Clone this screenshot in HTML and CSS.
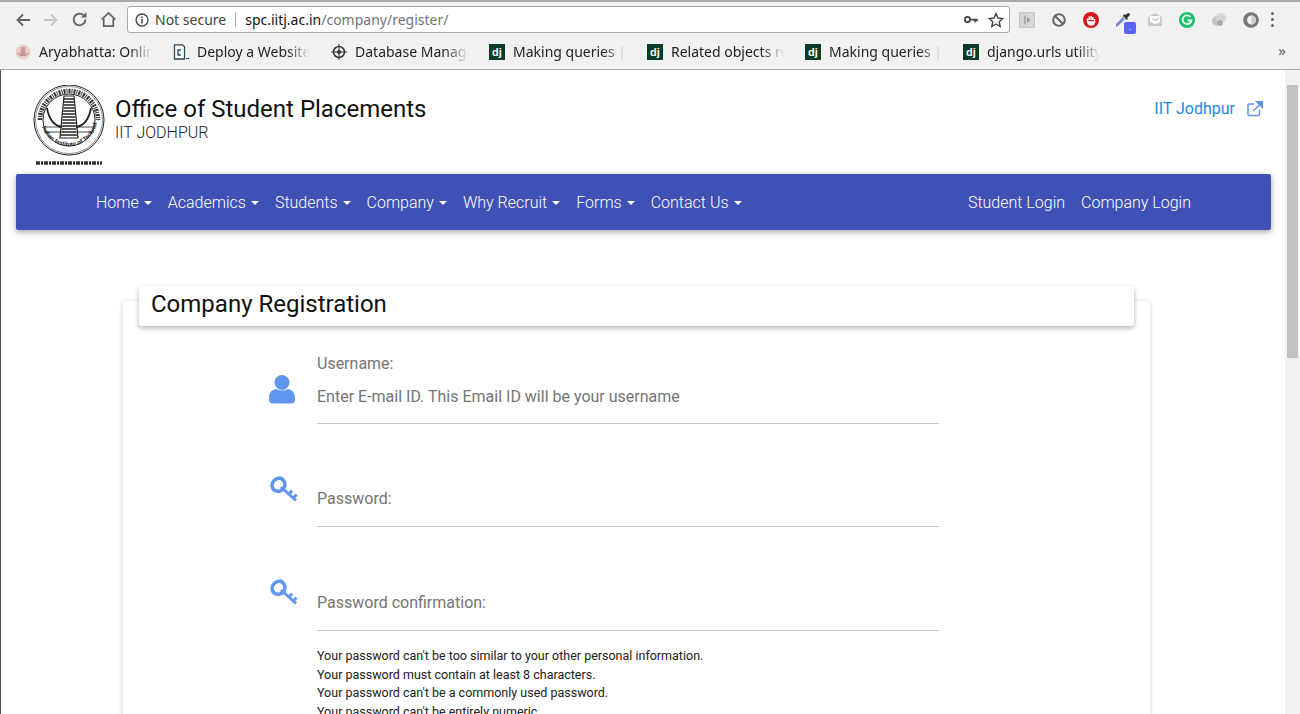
FILE: index.html
```html
<!DOCTYPE html>
<html lang="en">
<head>
    <meta charset="UTF-8">
    <meta name="viewport" content="width=device-width, initial-scale=1.0">
    <title>Company Registration</title>
    <link rel="stylesheet" href="styles.css">
</head>
<body>
    <!-- browser chrome -->
    <div class="toolbar">
        <svg class="tb-icon" viewBox="0 0 16 16"><path d="M15 8H3M8 2.5 2.5 8 8 13.500" fill="none" stroke="#5f6368" stroke-width="1.800"/></svg>
        <svg class="tb-icon" viewBox="0 0 16 16"><path d="M1 8h12M8 2.500 13.500 8 8 13.500" fill="none" stroke="#c4c4c4" stroke-width="1.800"/></svg>
        <svg class="tb-icon" viewBox="0 0 16 16"><path d="M13.500 8A5.500 5.500 0 1 1 11.800 4" fill="none" stroke="#5f6368" stroke-width="1.800"/><path d="M14.500 1v5h-5z" fill="#5f6368"/></svg>
        <svg class="tb-icon" viewBox="0 0 16 16"><path d="M1.500 8 8 1.800 14.500 8M3.500 7v7.200h9V7" fill="none" stroke="#5f6368" stroke-width="1.600"/></svg>
        <div class="address">
            <svg class="info-icon" viewBox="0 0 14 14"><circle cx="7" cy="7" r="6" fill="none" stroke="#444" stroke-width="1.300"/><path d="M7 6v4.500M7 3.500v1.500" stroke="#444" stroke-width="1.500"/></svg>
            <span class="not-secure">Not secure</span>
            <span class="addr-sep"></span>
            <span class="host">spc.iitj.ac.in</span><span class="path">/company/register/</span>
            <svg class="addr-key" viewBox="0 0 16 10"><circle cx="4" cy="5" r="3" fill="none" stroke="#444" stroke-width="2"/><path d="M7 5h8M12.500 5v3M15 5v2" stroke="#444" stroke-width="2"/></svg>
            <svg class="addr-star" viewBox="0 0 16 16"><path d="M8 1.500 10 6l4.800.5-3.600 3.200 1 4.800L8 12l-4.200 2.500 1-4.800L1.200 6.500 6 6z" fill="none" stroke="#444" stroke-width="1.400"/></svg>
        </div>
        <div class="extensions">
            <svg class="ext" viewBox="0 0 16 16"><rect x=".5" y=".5" width="15" height="15" fill="#d6d6d6" stroke="#c8c8c8"/><path d="M5 3.500h2v9H5z" fill="#aaa"/><path d="M8 5l3.500 3L8 11z" fill="#999"/></svg>
            <svg class="ext" viewBox="0 0 16 16"><circle cx="8" cy="8" r="5.800" fill="none" stroke="#666" stroke-width="2"/><path d="M4 4l8 8" stroke="#666" stroke-width="2"/></svg>
            <svg class="ext" viewBox="0 0 16 16"><circle cx="8" cy="8" r="8" fill="#d8141c"/><path d="M4.500 9V6.500M6.200 8V4.500M8 8V4M9.800 8V5M11.500 10V7M4.500 9q.5 4 3.500 4 3.500 0 3.500-3.500" stroke="#fff" stroke-width="1.500" fill="#fff"/></svg>
            <span class="ext-wrap">
                <svg class="ext" viewBox="0 0 16 16"><path d="M1 15l2-1 7-7-2-2-7 7z" fill="#6f8fd8"/><path d="M8 4l4 4 1-1-1-1 2.500-2.500a1.400 1.400 0 0 0-2-2L10 3 9 2z" fill="#333"/></svg>
                <span class="ext-badge">.</span>
            </span>
            <svg class="ext" viewBox="0 0 16 16"><path d="M1 5l7-4 7 4v9H1z" fill="#c9c9c9"/><path d="M3 4h10v6l-5 2-5-2z" fill="#fff"/><path d="M5.500 6.500l1.500 2 1.500-1.500 1 1.500 2-3" stroke="#aaa" fill="none"/></svg>
            <svg class="ext" viewBox="0 0 16 16"><circle cx="8" cy="8" r="8" fill="#15c26b"/><path d="M11.500 5A4.400 4.400 0 1 0 12.400 8.500H8.500" fill="none" stroke="#fff" stroke-width="1.800"/></svg>
            <svg class="ext" viewBox="0 0 16 16"><circle cx="6" cy="9" r="5" fill="#c4c4c4"/><circle cx="10" cy="6" r="5" fill="#d6d6d6"/><circle cx="9" cy="11" r="3" fill="#aaa"/></svg>
            <svg class="ext" viewBox="0 0 16 16"><circle cx="8" cy="8" r="7.800" fill="#777"/><circle cx="8.500" cy="8" r="4.500" fill="#f1f1f1"/><path d="M8.500 3.500a4.500 4.500 0 0 1 0 9z" fill="#ccc"/></svg>
        </div>
        <div class="kebab"><i></i><i></i><i></i></div>
    </div>

    <div class="bookmarks">
        <div class="bm">
            <svg class="bm-icon" viewBox="0 0 16 16"><circle cx="8" cy="8" r="7.500" fill="#eccfc8"/><path d="M6 3h4l1 9H5z" fill="#c99"/><path d="M2 9q6 5 12 0" fill="none" stroke="#b88"/></svg>
            <span class="bm-text">Aryabhatta: Online</span>
        </div>
        <div class="bm">
            <svg class="bm-icon" viewBox="0 0 16 16"><path d="M1.500.8h8l2 2V15h-10z" fill="#fff" stroke="#27475f" stroke-width="1.300"/><path d="M8 6H5v5h3" fill="none" stroke="#27475f" stroke-width="1.300"/><path d="M13 14.500h3" stroke="#27475f"/></svg>
            <span class="bm-text">Deploy a Website</span>
        </div>
        <div class="bm">
            <svg class="bm-icon" viewBox="0 0 16 16"><circle cx="8" cy="8" r="5.500" fill="none" stroke="#333" stroke-width="1.500"/><circle cx="8" cy="8" r="2" fill="#333"/><path d="M8 0v16M0 8h16" stroke="#333"/></svg>
            <span class="bm-text">Database Manager</span>
        </div>
        <div class="bm">
            <span class="dj">dj</span>
            <span class="bm-text">Making queries | Django</span>
        </div>
        <div class="bm">
            <span class="dj">dj</span>
            <span class="bm-text">Related objects reference</span>
        </div>
        <div class="bm">
            <span class="dj">dj</span>
            <span class="bm-text">Making queries | Django</span>
        </div>
        <div class="bm">
            <span class="dj">dj</span>
            <span class="bm-text">django.urls utility</span>
        </div>
        <span class="bm-more">»</span>
    </div>

    <!-- page -->
    <div class="viewport">
        <div class="page">
            <header class="site-header">
                <div class="brand">
                    <svg class="logo" viewBox="0 0 72 82">
                        <circle cx="36" cy="35" r="35" fill="#fff" stroke="#222" stroke-width="1"/>
                        <circle cx="36" cy="35" r="33.500" fill="none" stroke="#222" stroke-width=".5"/>
                        <circle cx="36" cy="35" r="26" fill="none" stroke="#222" stroke-width="1"/>
                        <path d="M12 35A24 24 0 0 1 60 35" fill="none" stroke="none"/>
                        <path d="M7 35A29 29 0 0 1 65 35" fill="none" stroke="#333" stroke-width="4.500" stroke-dasharray="2 1 1 1"/>
                        <path id="ring-low" d="M8 38A28.500 28.500 0 0 0 64 38" fill="none"/>
                        <text class="logo-ring"><textPath href="#ring-low" startOffset="4">Indian Institute of Technology Jodhpur</textPath></text>
                        <path d="M31 11h10l4 42H27z" fill="#fff" stroke="#222" stroke-width="1.200"/>
                        <path d="M31 14h10M31 17h10M30.700 20h10.600M30.500 23h11M30.200 26h11.600M30 29h12M29.700 32h12.600M29.500 35h13M29.200 38h13.600M29 41h14M28.700 44h14.600M28.400 47h15.200M28 50h16" stroke="#222" stroke-width="1.500"/>
                        <path d="M14 23q3 17 15 19M58 23q-3 17-15 19" fill="none" stroke="#222" stroke-width="1.800"/>
                        <path d="M11 42h17M44 42h17M11 47h17M44 47h17" stroke="#222" stroke-width=".8"/>
                        <path d="M3 78h66" stroke="#333" stroke-width="3.500" stroke-dasharray="4 1 2 1"/>
                    </svg>
                    <div class="brand-text">
                        <h1>Office of Student Placements</h1>
                        <p>IIT JODHPUR</p>
                    </div>
                </div>
                <a class="ext-link" href="#">IIT Jodhpur
                    <svg viewBox="0 0 16 16"><path d="M12.500 9v4.500a1 1 0 0 1-1 1H2a1 1 0 0 1-1-1V4a1 1 0 0 1 1-1h5" fill="none" stroke="#5c93ee" stroke-width="1.500"/><path d="M6.500 9.800 13 3.300M9.800 .8H16v6.200z" fill="#5c93ee" stroke="#5c93ee" stroke-width="1.500"/></svg>
                </a>
            </header>

            <nav class="navbar">
                <ul class="nav-left">
                    <li class="caret">Home</li>
                    <li class="caret">Academics</li>
                    <li class="caret">Students</li>
                    <li class="caret">Company</li>
                    <li class="caret">Why Recruit</li>
                    <li class="caret">Forms</li>
                    <li class="caret">Contact Us</li>
                </ul>
                <ul class="nav-right">
                    <li>Student Login</li>
                    <li>Company Login</li>
                </ul>
            </nav>

            <section class="card">
                <div class="card-header">
                    <h2>Company Registration</h2>
                </div>
                <form class="reg-form">
                    <div class="field field-user">
                        <svg class="field-icon" viewBox="0 0 26 29"><circle cx="13" cy="7.500" r="7.500" fill="#6196ee"/><path d="M0 24c0-6 2-9 7-10q6 3 12 0c5 1 7 4 7 10q0 4.500-4 4.500H4q-4 0-4-4.500z" fill="#6196ee"/></svg>
                        <div class="field-body">
                            <label>Username:</label>
                            <div class="placeholder">Enter E-mail ID. This Email ID will be your username</div>
                        </div>
                    </div>
                    <div class="field field-pass">
                        <svg class="field-icon key" viewBox="0 0 30 30"><path d="M12 12 27 25.500M20 19l3-3.500M24.500 23l3-3.500" fill="none" stroke="#6196ee" stroke-width="3"/><path d="M3 11a8 8 0 0 1 8-8 8 8 0 0 1 5 6.500 7 7 0 0 1-5 6.500Q4 17 3 11z" fill="none" stroke="#6196ee" stroke-width="3.500"/></svg>
                        <div class="field-body">
                            <label>Password:</label>
                        </div>
                    </div>
                    <div class="field field-pass field-confirm">
                        <svg class="field-icon key" viewBox="0 0 30 30"><path d="M12 12 27 25.500M20 19l3-3.500M24.500 23l3-3.500" fill="none" stroke="#6196ee" stroke-width="3"/><path d="M3 11a8 8 0 0 1 8-8 8 8 0 0 1 5 6.500 7 7 0 0 1-5 6.500Q4 17 3 11z" fill="none" stroke="#6196ee" stroke-width="3.500"/></svg>
                        <div class="field-body">
                            <label>Password confirmation:</label>
                        </div>
                    </div>
                    <div class="help-text">
                        <p>Your password can't be too similar to your other personal information.</p>
                        <p>Your password must contain at least 8 characters.</p>
                        <p>Your password can't be a commonly used password.</p>
                        <p>Your password can't be entirely numeric.</p>
                    </div>
                </form>
            </section>
        </div>
        <div class="scrollbar"><div class="thumb"></div></div>
    </div>
</body>
</html>
```

FILE: styles.css
```css
* {
    box-sizing: border-box;
}

html, body {
    height: 100%;
}

body {
    margin: 0;
    overflow: hidden;
    font-family: 'Roboto', sans-serif;
    background-color: #ffffff;
    color: #212121;
}

/* Browser chrome */
.toolbar {
    height: 34px;
    background-color: #f1f1f1;
    border-top: 2px solid #a8a8a8;
    display: flex;
    align-items: center;
    padding: 3px 13px 0 15px;
    font-family: 'Noto Sans', sans-serif;
}

.tb-icon {
    width: 16px;
    height: 16px;
    margin-right: 12px;
    flex: none;
}

.tb-icon:nth-child(3),
.tb-icon:nth-child(4) {
    width: 17px;
    height: 17px;
}

.tb-icon:nth-child(4) {
    margin-right: 9px;
}

.address {
    width: 883px;
    height: 27px;
    margin-left: 1px;
    background-color: #ffffff;
    border: 1px solid #a9a9a9;
    border-radius: 3px;
    display: flex;
    align-items: center;
    padding: 0 5px 0 7px;
    font-size: 14px;
    flex: none;
}

.info-icon {
    width: 14px;
    height: 14px;
    margin-right: 6px;
}

.not-secure {
    color: #444444;
}

.addr-sep {
    width: 1px;
    height: 15px;
    background-color: #b5b5b5;
    margin: 0 9px;
}

.host {
    color: #111111;
}

.path {
    color: #70757a;
}

.addr-key {
    width: 14px;
    height: 9px;
    margin-left: auto;
    margin-right: 10px;
}

.addr-star {
    width: 16px;
    height: 16px;
}

.extensions {
    display: flex;
    align-items: center;
    gap: 16px;
    margin-left: 9px;
}

.ext {
    width: 16px;
    height: 16px;
    display: block;
}

.ext-wrap {
    position: relative;
    display: block;
}

.ext-badge {
    position: absolute;
    right: -5px;
    bottom: -6px;
    width: 12px;
    height: 12px;
    background-color: #5a63f5;
    border-radius: 2px;
    color: #ffffff;
    font-size: 8px;
    line-height: 10px;
    text-align: center;
}

.kebab {
    margin-left: 12px;
    display: flex;
    flex-direction: column;
    gap: 3px;
}

.kebab i {
    display: block;
    width: 3px;
    height: 3px;
    border-radius: 50%;
    background-color: #5f6368;
}

.bookmarks {
    height: 36px;
    background-color: #f1f1f1;
    border-bottom: 1px solid #a8a8a8;
    display: flex;
    align-items: center;
    padding-left: 15px;
    font-family: 'Noto Sans', sans-serif;
    font-size: 14px;
    color: #222222;
    position: relative;
}

.bm {
    width: 158px;
    flex: none;
    display: flex;
    align-items: center;
    gap: 8px;
}

.bm-icon {
    width: 16px;
    height: 16px;
    flex: none;
}

.bm-text {
    width: 113px;
    white-space: nowrap;
    overflow: hidden;
    -webkit-mask-image: linear-gradient(to right, #000 80%, transparent 100%);
    mask-image: linear-gradient(to right, #000 80%, transparent 100%);
}

.dj {
    width: 16px;
    height: 16px;
    flex: none;
    background-color: #0c3c26;
    color: #ffffff;
    font-family: 'Liberation Sans', sans-serif;
    font-size: 11px;
    font-weight: bold;
    line-height: 16px;
    text-align: center;
}

.bm-more {
    position: absolute;
    right: 14px;
    top: 6px;
    font-size: 15px;
    color: #666666;
}

/* Page */
.viewport {
    display: flex;
    height: 644px;
    border-left: 1px solid #555555;
    overflow: hidden;
}

.page {
    flex: 1;
    min-width: 0;
    padding: 15px 14px 0 15px;
    background-color: #ffffff;
}

.scrollbar {
    width: 15px;
    flex: none;
    background-color: #f1f1f1;
    padding: 15px 2px 0;
}

.thumb {
    height: 273px;
    background-color: #c1c1c1;
}

.site-header {
    display: flex;
    justify-content: space-between;
    align-items: flex-start;
    height: 89px;
    padding-left: 17px;
}

.brand {
    display: flex;
    align-items: flex-start;
}

.logo {
    width: 72px;
    height: 82px;
    flex: none;
}

.brand-text {
    margin-left: 10px;
    padding-top: 9px;
}

.brand-text h1 {
    margin: 0;
    font-size: 24px;
    font-weight: 400;
    line-height: 30px;
    color: #111111;
}

.brand-text p {
    margin: 0;
    font-size: 16px;
    font-weight: 300;
    line-height: 18px;
    color: #222222;
}

.logo-ring {
    font-family: 'Liberation Sans', sans-serif;
    font-size: 6px;
    font-weight: bold;
    fill: #222222;
}

.ext-link {
    display: flex;
    align-items: center;
    gap: 12px;
    margin-top: 14px;
    margin-right: 8px;
    font-size: 16px;
    line-height: 19px;
    color: #1e88e5;
    text-decoration: none;
}

.ext-link svg {
    width: 16px;
    height: 16px;
}

.navbar {
    height: 56px;
    background-color: #3f51b5;
    border-radius: 2px;
    box-shadow: 0 2px 5px rgba(0, 0, 0, 0.26), 0 2px 10px rgba(0, 0, 0, 0.12);
    display: flex;
    align-items: center;
    justify-content: space-between;
    padding: 0 80px;
    color: #ffffff;
    font-size: 16px;
    font-weight: 300;
}

.navbar ul {
    list-style: none;
    margin: 0;
    padding: 0;
    display: flex;
}

.nav-left {
    gap: 16px;
}

.nav-right {
    gap: 16px;
}

.caret::after {
    content: "";
    display: inline-block;
    margin-left: 5px;
    vertical-align: 3px;
    border-top: 4.800px solid #ffffff;
    border-left: 4.800px solid transparent;
    border-right: 4.800px solid transparent;
}

.card {
    margin: 71px 121px 0 107px;
    height: 500px;
    background-color: #ffffff;
    border-radius: 3px;
    box-shadow: 0 1px 5px rgba(0, 0, 0, 0.2);
    padding: 0 16px;
}

.card-header {
    height: 40px;
    position: relative;
    top: -15px;
    background-color: #ffffff;
    border-radius: 3px;
    box-shadow: 0 2px 5px rgba(0, 0, 0, 0.3);
    padding: 0 12px;
}

.card-header h2 {
    margin: 0;
    font-size: 24px;
    font-weight: 400;
    line-height: 37px;
    color: #111111;
}

.reg-form {
    margin-top: -15px;
    padding: 0 0 0 130px;
    width: 800px;
}

.field {
    display: flex;
    align-items: flex-start;
}

.field-icon {
    width: 26px;
    height: 29px;
    flex: none;
    margin-top: 49px;
}

.field-icon.key {
    width: 30px;
    height: 30px;
    margin-top: 51px;
}

.field-body {
    width: 622px;
    margin-left: 22px;
    border-bottom: 1px solid #c8c8c8;
    color: #757575;
    font-size: 16px;
    line-height: 19px;
}

.field-user .field-body {
    height: 98px;
    padding-top: 28px;
}

.field-pass .field-icon {
    margin-left: 0;
}

.field-pass .field-body {
    margin-left: 18px;
    height: 103px;
    padding-top: 65px;
}

.field-confirm .field-body {
    height: 104px;
    padding-top: 66px;
}

.field-pass .field-icon.key {
    margin-top: 51px;
}

.placeholder {
    margin-top: 14px;
}

.help-text {
    margin: 16px 0 0 48px;
    font-size: 12.500px;
    line-height: 18.700px;
    color: #212121;
}

.help-text p {
    margin: 0;
}
```
